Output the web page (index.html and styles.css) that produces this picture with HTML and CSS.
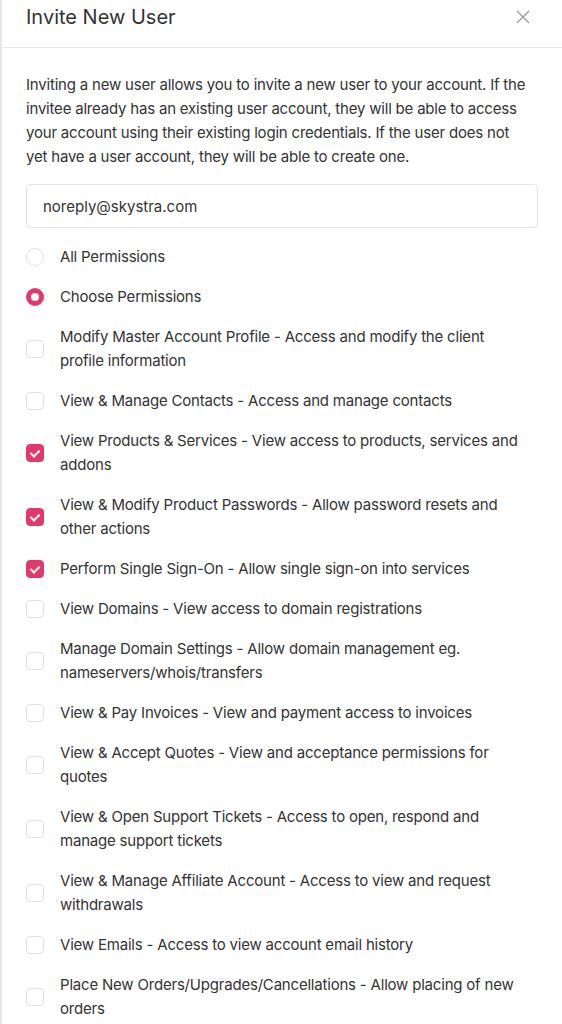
FILE: index.html
```html
<!DOCTYPE html>
<html lang="en">
<head>
    <meta charset="UTF-8">
    <meta name="viewport" content="width=device-width, initial-scale=1.0">
    <title>Invite New User</title>
    <link rel="stylesheet" href="styles.css">
</head>
<body>
    <div class="modal">
        <div class="modal-header">
            <h2 class="modal-title">Invite New User</h2>
            <button class="close-btn" aria-label="Close">
                <svg width="14" height="14" viewBox="0 0 14 14"><path d="M1 1L13 13M13 1L1 13" stroke="#9a9aa2" stroke-width="1.3" fill="none"/></svg>
            </button>
        </div>
        <div class="modal-body">
            <p class="intro">Inviting a new user allows you to invite a new user to your account. If the invitee already has an existing user account, they will be able to access your account using their existing login credentials. If the user does not yet have a user account, they will be able to create one.</p>
            <input type="email" class="email" value="noreply@skystra.com">

            <label class="option"><span class="radio"></span>All Permissions</label>
            <label class="option"><span class="radio checked"></span>Choose Permissions</label>

            <label class="option"><span class="check"></span>Modify Master Account Profile - Access and modify the client profile information</label>
            <label class="option"><span class="check"></span>View &amp; Manage Contacts - Access and manage contacts</label>
            <label class="option"><span class="check checked"></span>View Products &amp; Services - View access to products, services and addons</label>
            <label class="option"><span class="check checked"></span>View &amp; Modify Product Passwords - Allow password resets and other actions</label>
            <label class="option"><span class="check checked"></span>Perform Single Sign-On - Allow single sign-on into services</label>
            <label class="option"><span class="check"></span>View Domains - View access to domain registrations</label>
            <label class="option"><span class="check"></span>Manage Domain Settings - Allow domain management eg. nameservers/whois/transfers</label>
            <label class="option"><span class="check"></span>View &amp; Pay Invoices - View and payment access to invoices</label>
            <label class="option"><span class="check"></span>View &amp; Accept Quotes - View and acceptance permissions for quotes</label>
            <label class="option"><span class="check"></span>View &amp; Open Support Tickets - Access to open, respond and manage support tickets</label>
            <label class="option"><span class="check"></span>View &amp; Manage Affiliate Account - Access to view and request withdrawals</label>
            <label class="option"><span class="check"></span>View Emails - Access to view account email history</label>
            <label class="option"><span class="check"></span>Place New Orders/Upgrades/Cancellations - Allow placing of new orders</label>
        </div>
    </div>
</body>
</html>
```

FILE: styles.css
```css
body {
    margin: 0;
    font-family: "Inter", "Liberation Sans", sans-serif;
    color: #333;
    background: #fff;
}
.modal {
    border-left: 2px solid #e6e6e6;
    min-height: 1024px;
}
.modal-header {
    display: flex;
    justify-content: space-between;
    align-items: flex-start;
    padding: 2px 24px 15px 24px;
    border-bottom: 1px solid #e8e8e8;
}
.modal-title {
    margin: 0;
    font-size: 20px;
    font-weight: 400;
    line-height: 30px;
    color: #333;
}
.close-btn {
    background: none;
    border: none;
    padding: 0;
    margin: 8px 8px 0 0;
    width: 14px;
    height: 14px;
    cursor: pointer;
}
.modal-body {
    padding: 25px 24px 0 24px;
    display: flex;
    flex-direction: column;
    gap: 16px;
    font-size: 15px;
    line-height: 24px;
    letter-spacing: -0.2px;
}
.intro {
    margin: 0;
    padding-right: 8px;
}
.email {
    height: 44px;
    margin-top: -1px;
    margin-bottom: 1px;
    box-sizing: border-box;
    padding: 0 16px;
    border: 1px solid #e3e3e3;
    border-radius: 4px;
    font: inherit;
    color: #333;
}
.option {
    display: flex;
    align-items: center;
    gap: 16px;
    padding-right: 8px;
}
.radio, .check {
    flex: none;
    width: 18px;
    height: 18px;
    box-sizing: border-box;
    border: 1px solid #e0e0e0;
    background: #fff;
}
.radio {
    border-radius: 50%;
}
.radio.checked {
    border: 5px solid #e13a6a;
}
.check {
    border-radius: 4px;
    position: relative;
}
.check.checked {
    background: #e13a6a;
    border-color: #e13a6a;
}
.check.checked::after {
    content: "";
    position: absolute;
    left: 5px;
    top: 3px;
    width: 4px;
    height: 7px;
    border: solid #fff;
    border-width: 0 2px 2px 0;
    transform: rotate(45deg);
}
```
